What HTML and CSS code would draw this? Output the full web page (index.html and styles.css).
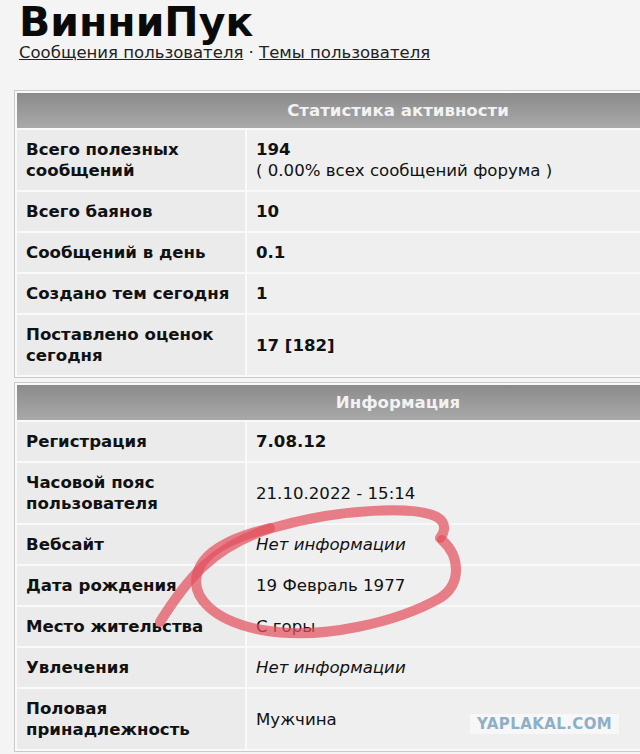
FILE: index.html
```html
<!DOCTYPE html>
<html lang="ru">
<head>
  <meta charset="UTF-8">
  <meta name="viewport" content="width=device-width, initial-scale=1.0">
  <title>ВинниПук</title>
  <link rel="stylesheet" href="styles.css">
</head>
<body>
  <div class="profile-head">
    <h1 class="user-name">ВинниПук</h1>
    <div class="user-links">
      <a href="#">Сообщения пользователя</a> · <a href="#">Темы пользователя</a>
    </div>
  </div>

  <table class="info-table">
    <tr><th colspan="2">Статистика активности</th></tr>
    <tr>
      <td class="label">Всего полезных сообщений</td>
      <td class="value"><b>194</b><br>( 0.00% всех сообщений форума )</td>
    </tr>
    <tr><td class="label">Всего баянов</td><td class="value"><b>10</b></td></tr>
    <tr><td class="label">Сообщений в день</td><td class="value"><b>0.1</b></td></tr>
    <tr><td class="label">Создано тем сегодня</td><td class="value"><b>1</b></td></tr>
    <tr><td class="label">Поставлено оценок сегодня</td><td class="value"><b>17 [182]</b></td></tr>
  </table>

  <table class="info-table second">
    <tr><th colspan="2">Информация</th></tr>
    <tr><td class="label">Регистрация</td><td class="value"><b>7.08.12</b></td></tr>
    <tr><td class="label">Часовой пояс пользователя</td><td class="value">21.10.2022 - 15:14</td></tr>
    <tr><td class="label">Вебсайт</td><td class="value"><i>Нет информации</i></td></tr>
    <tr><td class="label">Дата рождения</td><td class="value">19 Февраль 1977</td></tr>
    <tr><td class="label">Место жительства</td><td class="value">С горы</td></tr>
    <tr><td class="label">Увлечения</td><td class="value"><i>Нет информации</i></td></tr>
    <tr><td class="label">Половая принадлежность</td><td class="value">Мужчина</td></tr>
  </table>

  <!-- red marker circle drawn over the screenshot -->
  <svg class="marker" width="640" height="754" viewBox="0 0 640 754">
    <path d="M160,622 C185,582 212,546 272,528 C342,508 416,506 437,517 C447,523 445,532 440,538"
          fill="none" stroke="#e2505e" stroke-width="10" stroke-linecap="round" opacity="0.72"/>
    <path d="M442,540 C460,556 462,584 440,598 C400,621 322,641 262,630 C214,621 189,597 198,571 C205,551 230,538 270,528"
          fill="none" stroke="#e2505e" stroke-width="10" stroke-linecap="round" opacity="0.72"/>
  </svg>

  <div class="watermark">YAPLAKAL.COM</div>
</body>
</html>
```

FILE: styles.css
```css
/* Page */
body {
  margin: 0;
  background: #f4f4f4;
  font-family: "DejaVu Sans", Verdana, sans-serif;
  color: #111;
  overflow: hidden;
  width: 640px;
  height: 754px;
  position: relative;
}

/* User name and links */
.profile-head {
  padding: 0 0 0 19px;
}

.user-name {
  margin: 0;
  font-size: 41px;
  line-height: 44px;
  font-weight: bold;
  color: #0a0a0a;
}

.user-links {
  font-size: 16.5px;
  line-height: 18px;
  color: #222;
}

.user-links a {
  color: #222;
  text-decoration: underline;
}

/* Stat tables */
.info-table {
  width: 768px;
  margin: 28px 0 0 14px;
  border: 1px solid #c9c9c9;
  border-spacing: 2px;
  background: #f9f9f9;
  font-size: 16.6px;
  line-height: 21px;
}

.info-table.second {
  margin-top: 4px;
}

.info-table th {
  padding: 7px 9px;
  background: linear-gradient(#8b8b8b, #a9a9a9);
  color: #f2f2f2;
  font-weight: bold;
  text-align: center;
}

.info-table td {
  padding: 9px 9px;
  text-align: left;
  vertical-align: middle;
}

.info-table td.label {
  width: 210px;
  background: #ebebeb;
  font-weight: bold;
}

.info-table td.value {
  background: #efefef;
}

/* Overlays */
.marker {
  position: absolute;
  left: 0;
  top: 0;
  pointer-events: none;
}

.watermark {
  position: absolute;
  left: 470px;
  top: 714px;
  padding: 1px 7px;
  background: #f7f7f7;
  color: #8eafc6;
  font-family: "DejaVu Sans", sans-serif;
  font-weight: bold;
  font-size: 15px;
  letter-spacing: 0.4px;
}
```
